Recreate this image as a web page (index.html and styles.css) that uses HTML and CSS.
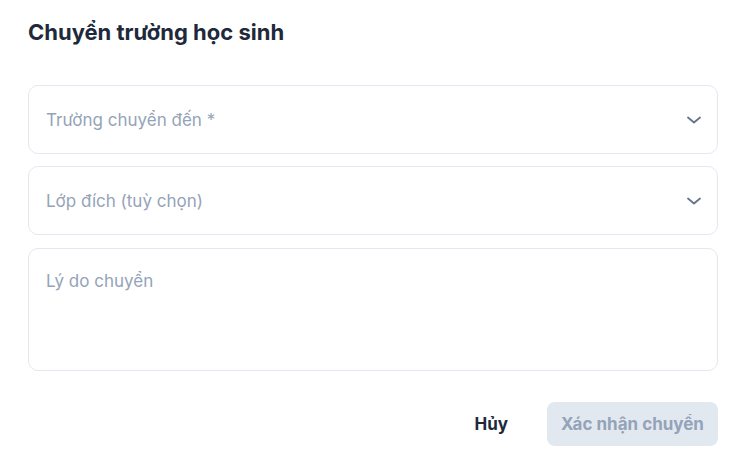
FILE: index.html
```html
<!DOCTYPE html>
<html lang="vi">
<head>
<meta charset="utf-8">
<link rel="stylesheet" href="styles.css">
</head>
<body>
<div class="dialog">
  <h2 class="title">Chuyển trường học sinh</h2>
  <div class="fields">
    <div class="select">
      <span class="placeholder">Trường chuyển đến *</span>
      <svg class="chev" width="20" height="20" viewBox="0 0 20 20"><path d="M4 7.5 L10 12.5 L16 7.5" fill="none" stroke="#64748b" stroke-width="1.8" stroke-linecap="round" stroke-linejoin="round"/></svg>
    </div>
    <div class="select">
      <span class="placeholder">Lớp đích (tuỳ chọn)</span>
      <svg class="chev" width="20" height="20" viewBox="0 0 20 20"><path d="M4 7.5 L10 12.5 L16 7.5" fill="none" stroke="#64748b" stroke-width="1.8" stroke-linecap="round" stroke-linejoin="round"/></svg>
    </div>
    <div class="textarea">
      <span class="placeholder">Lý do chuyển</span>
    </div>
  </div>
  <div class="actions">
    <button class="btn cancel">Hủy</button>
    <button class="btn confirm">Xác nhận chuyển</button>
  </div>
</div>
</body>
</html>
```
FILE: styles.css
```css
* { box-sizing: border-box; }
html, body { margin: 0; padding: 0; background: #fff; }
body { font-family: Inter, "Noto Sans", sans-serif; }
.dialog { padding: 18px 12px 0 28px; }
.title {
  margin: 0;
  font-size: 22px;
  line-height: 28px;
  font-weight: 700;
  color: #1e293b;
}
.fields {
  margin-top: 39px;
  display: flex;
  flex-direction: column;
  gap: 12px;
}
.select {
  height: 69px;
  border: 1px solid #e2e8f0;
  border-radius: 10px;
  display: flex;
  align-items: center;
  justify-content: space-between;
  padding: 0 13px 0 17px;
}
.textarea {
  margin-top: 1px;
  height: 123px;
  border: 1px solid #e2e8f0;
  border-radius: 10px;
  padding: 20px 17px;
}
.placeholder {
  font-size: 17px;
  line-height: 24px;
  color: #94a3b8;
  display: block;
}
.chev { display: block; }
.actions {
  margin-top: 31px;
  display: flex;
  justify-content: flex-end;
  align-items: center;
  gap: 23px;
}
.btn {
  font-family: inherit;
  font-size: 17px;
  font-weight: 700;
  border: none;
  height: 44px;
  border-radius: 8px;
  padding: 0 16px;
}
.cancel { background: transparent; color: #1e293b; }
.confirm { background: #e2e8f0; color: #94a3b8; width: 171px; padding: 0; }
```
